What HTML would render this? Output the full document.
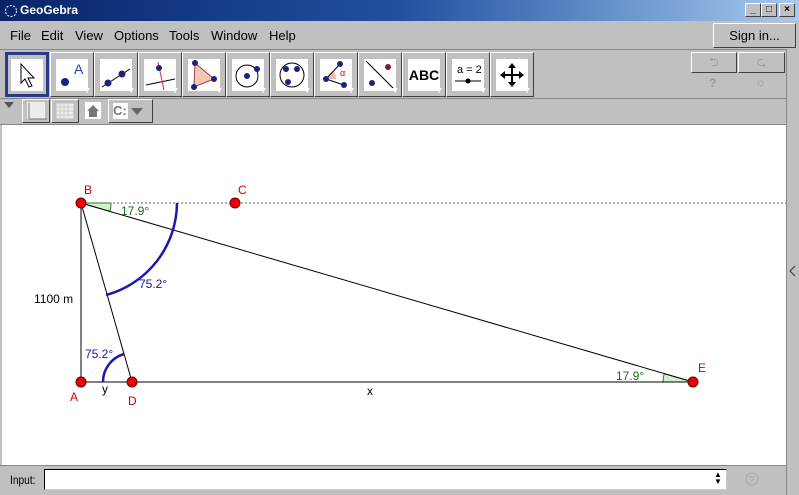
<!DOCTYPE html>
<html><head><meta charset="utf-8"><style>
*{margin:0;padding:0;box-sizing:border-box}
body{width:799px;height:495px;overflow:hidden;background:#c0c0c0;font-family:"Liberation Sans",sans-serif;position:relative}
.abs{position:absolute}
#title{left:0;top:0;width:799px;height:21px;background:linear-gradient(90deg,#0a246a,#2050a0 50%,#a6caf0);color:#fff;font-weight:bold;font-size:12px;line-height:21px;padding-left:20px}
.wb{top:3px;width:16px;height:14px;background:#c0c0c0;border:1px solid;border-color:#fff #404040 #404040 #fff;font-size:10px;line-height:12px;text-align:center;color:#000;font-weight:bold}
.m{top:28px;font-size:13px}
.btn{top:52px;width:44px;height:45px;background:#c0c0c0;border:1px solid;border-color:#fff #404040 #404040 #fff}
.btn .ic{position:absolute;left:5px;top:6px;width:32px;height:32px;background:#fff}
.btn .tri2{position:absolute;right:3px;bottom:3px;width:0;height:0;border-left:3px solid transparent;border-right:3px solid transparent;border-top:5px solid #fff}
.sb{top:99px;height:24px;border:1px solid;border-color:#fff #404040 #404040 #fff;background:#c0c0c0}
</style></head><body>
<div id="title" class="abs">GeoGebra</div>
<svg class="abs" style="left:4px;top:4px" width="14" height="14"><circle cx="7" cy="7" r="5.5" fill="none" stroke="#fff" stroke-dasharray="2,1.5"/></svg>
<div class="abs wb" style="left:745px">_</div>
<div class="abs wb" style="left:761px">□</div>
<div class="abs wb" style="left:779px">×</div>
<div class="abs m" style="left:10px">File</div>
<div class="abs m" style="left:41px">Edit</div>
<div class="abs m" style="left:75px">View</div>
<div class="abs m" style="left:114px">Options</div>
<div class="abs m" style="left:169px">Tools</div>
<div class="abs m" style="left:211px">Window</div>
<div class="abs m" style="left:269px">Help</div>
<div class="abs" style="left:713px;top:23px;width:83px;height:25px;border:1px solid;border-color:#fff #404040 #404040 #fff;font-size:13px;text-align:center;line-height:23px">Sign in...</div>
<div class="abs" style="left:0;top:49px;width:786px;height:1px;background:#888"></div>

<div class="abs btn" style="left:5px;border:3px solid #2a3a8a;background:#c0c0c0"><div class="ic" style="left:3px;top:4px"><svg width="32" height="32"><path d="M10 5 L10 24 L14 20 L18 28 L21 27 L17 19 L23 19 Z" fill="#fff" stroke="#000"/></svg></div></div>
<div class="abs btn" style="left:50px"><div class="ic"><svg width="32" height="32"><circle cx="9" cy="23" r="4" fill="#1a237e"/><text x="18" y="15" font-size="14" fill="#1a3fcc" font-family="Liberation Sans">A</text></svg></div><div class="tri2"></div></div>
<div class="abs btn" style="left:94px"><div class="ic"><svg width="32" height="32"><line x1="2" y1="28" x2="30" y2="10" stroke="#000"/><circle cx="8" cy="24" r="3.5" fill="#1a237e"/><circle cx="22" cy="15" r="3.5" fill="#1a237e"/></svg></div><div class="tri2"></div></div>
<div class="abs btn" style="left:138px"><div class="ic"><svg width="32" height="32"><line x1="2" y1="26" x2="31" y2="20" stroke="#000"/><line x1="14" y1="3" x2="20" y2="31" stroke="#e03030"/><circle cx="15" cy="9" r="3" fill="#1a237e"/></svg></div><div class="tri2"></div></div>
<div class="abs btn" style="left:182px"><div class="ic"><svg width="32" height="32"><path d="M7 4 L26 20 L6 28 Z" fill="#f0c8b8" stroke="#a04040"/><circle cx="7" cy="4" r="3" fill="#1a237e"/><circle cx="26" cy="20" r="3" fill="#1a237e"/><circle cx="6" cy="28" r="3" fill="#1a237e"/></svg></div><div class="tri2"></div></div>
<div class="abs btn" style="left:226px"><div class="ic"><svg width="32" height="32"><circle cx="15" cy="17" r="11" fill="none" stroke="#000"/><circle cx="15" cy="17" r="3" fill="#1a237e"/><circle cx="25" cy="10" r="3" fill="#1a237e"/></svg></div><div class="tri2"></div></div>
<div class="abs btn" style="left:270px"><div class="ic"><svg width="32" height="32"><circle cx="16" cy="16" r="12" fill="none" stroke="#000"/><circle cx="10" cy="10" r="3" fill="#1a237e"/><circle cx="21" cy="10" r="3" fill="#1a237e"/><circle cx="12" cy="23" r="3" fill="#1a237e"/></svg></div><div class="tri2"></div></div>
<div class="abs btn" style="left:314px"><div class="ic"><svg width="32" height="32"><path d="M6 20 L16 20 A10 10 0 0 0 13 12 Z" fill="#f0b8b8"/><line x1="6" y1="20" x2="20" y2="5" stroke="#000"/><line x1="6" y1="20" x2="24" y2="26" stroke="#000"/><circle cx="6" cy="20" r="3" fill="#1a237e"/><circle cx="20" cy="5" r="3" fill="#1a237e"/><circle cx="24" cy="26" r="3" fill="#1a237e"/><text x="20" y="17" font-size="9" fill="#d00">α</text></svg></div><div class="tri2"></div></div>
<div class="abs btn" style="left:358px"><div class="ic"><svg width="32" height="32"><line x1="2" y1="2" x2="30" y2="30" stroke="#000"/><circle cx="24" cy="8" r="3" fill="#8b1a1a"/><circle cx="8" cy="24" r="3" fill="#1a237e"/></svg></div><div class="tri2"></div></div>
<div class="abs btn" style="left:402px"><div class="ic" style="font-size:14px;line-height:32px;text-align:center;font-weight:bold">ABC</div><div class="tri2"></div></div>
<div class="abs btn" style="left:446px"><div class="ic"><svg width="32" height="32"><text x="5" y="14" font-size="11" font-family="Liberation Sans">a = 2</text><line x1="3" y1="22" x2="29" y2="22" stroke="#000"/><circle cx="16" cy="22" r="2.5" fill="#000"/></svg></div><div class="tri2"></div></div>
<div class="abs btn" style="left:490px"><div class="ic"><svg width="32" height="32"><path d="M16 4 L20 9 L17 9 L17 15 L23 15 L23 12 L28 16 L23 20 L23 17 L17 17 L17 23 L20 23 L16 28 L12 23 L15 23 L15 17 L9 17 L9 20 L4 16 L9 12 L9 15 L15 15 L15 9 L12 9 Z" fill="#000"/></svg></div><div class="tri2"></div></div>

<div class="abs" style="left:691px;top:52px;width:46px;height:21px;border:1px solid;border-color:#fff #404040 #404040 #fff;color:#999;text-align:center;font-size:12px;line-height:19px">⮌</div>
<div class="abs" style="left:738px;top:52px;width:47px;height:21px;border:1px solid;border-color:#fff #404040 #404040 #fff;color:#999;text-align:center;font-size:12px;line-height:19px">⮎</div>
<div class="abs" style="left:709px;top:76px;color:#999;font-size:12px;font-weight:bold">?</div>
<div class="abs" style="left:755px;top:75px;color:#999;font-size:12px">☼</div>
<div class="abs" style="left:786px;top:49px;width:1px;height:446px;background:#888"></div>

<div class="abs" style="left:0;top:98px;width:786px;height:1px;background:#888"></div>
<svg class="abs" style="left:4px;top:102px" width="10" height="6"><path d="M0 0 L10 0 L5 6Z" fill="#555"/></svg>
<div class="abs sb" style="left:22px;width:28px"><svg width="26" height="22"><rect x="4" y="2" width="18" height="17" fill="#fff" opacity=".7"/><path d="M6 3 V19 H24" fill="none" stroke="#777"/></svg></div>
<div class="abs sb" style="left:51px;width:28px"><svg width="26" height="22"><rect x="4" y="3" width="18" height="16" fill="#eee" stroke="#bbb"/><path d="M4 7H22M4 11H22M4 15H22M8 3V19M12 3V19M16 3V19" stroke="#ccc"/></svg></div>
<div class="abs" style="left:85px;top:102px;width:16px;height:17px;background:#fff"><svg width="16" height="17"><path d="M8 3 L14 9 L12 9 L12 15 L4 15 L4 9 L2 9Z" fill="#777"/></svg></div>
<div class="abs sb" style="left:108px;width:45px"><div style="position:absolute;left:4px;top:3px;width:15px;height:16px;background:#fff;color:#777;font-weight:bold;font-size:13px;line-height:16px">C:</div><svg class="abs" style="left:22px;top:8px" width="12" height="7"><path d="M0 0H12L6 7Z" fill="#666"/></svg></div>
<div class="abs" style="left:0;top:124px;width:786px;height:1px;background:#888"></div>

<svg class="abs" style="left:0;top:125px" width="786" height="340">
<rect x="2" y="0" width="784" height="340" fill="#fff"/>
<g transform="translate(0,-125)">
<line x1="81" y1="203" x2="786" y2="203" stroke="#666" stroke-dasharray="2,2"/>
<path d="M81 203 L111 203 A30 30 0 0 1 110 211.4 Z" fill="#d8ecd8" stroke="#2a7a2a"/>
<path d="M693 382 L663 382 A30 30 0 0 1 664.2 373.6 Z" fill="#d8ecd8" stroke="#2a7a2a"/>
<line x1="81" y1="203" x2="81" y2="382" stroke="#000"/>
<line x1="81" y1="382" x2="693" y2="382" stroke="#000"/>
<line x1="81" y1="203" x2="132" y2="382" stroke="#000"/>
<line x1="81" y1="203" x2="693" y2="382" stroke="#000"/>
<path d="M177 203 A96 96 0 0 1 106 295" fill="none" stroke="#1a1ab0" stroke-width="2.5"/>
<path d="M103 382 A29 29 0 0 1 124 354" fill="none" stroke="#1a1ab0" stroke-width="2.5"/>
<g fill="#e00" stroke="#600" stroke-width="1">
<circle cx="81" cy="203" r="5"/><circle cx="235" cy="203" r="5"/><circle cx="81" cy="382" r="5"/><circle cx="132" cy="382" r="5"/><circle cx="693" cy="382" r="5"/>
</g>
<g font-family="Liberation Sans" font-size="12">
<text x="84" y="194" fill="#c00">B</text><text x="238" y="194" fill="#c00">C</text><text x="70" y="401" fill="#c00">A</text><text x="128" y="405" fill="#c00">D</text><text x="698" y="372" fill="#c00">E</text>
<text x="121" y="215" fill="#1a6a1a">17.9°</text><text x="616" y="380" fill="#1a6a1a">17.9°</text>
<text x="139" y="288" fill="#1a1a9a">75.2°</text><text x="85" y="358" fill="#1a1a9a">75.2°</text>
<text x="34" y="303" fill="#000">1100 m</text><text x="102" y="393" fill="#000">y</text><text x="367" y="395" fill="#000">x</text>
</g></g></svg>
<svg class="abs" style="left:789px;top:265px" width="8" height="12"><path d="M6 1 L1 6 L6 11" fill="none" stroke="#333"/></svg>
<div class="abs" style="left:0;top:465px;width:786px;height:1px;background:#888"></div>
<div class="abs" style="left:10px;top:473px;font-size:12px;transform:scaleX(.85);transform-origin:left">Input:</div>
<div class="abs" style="left:44px;top:469px;width:683px;height:21px;background:#fff;border:1px solid;border-color:#000 #ccc #ccc #000"></div>
<div class="abs" style="left:714px;top:471px;font-size:8px;line-height:7px">▲<br>▼</div>
<svg class="abs" style="left:745px;top:472px" width="14" height="14"><circle cx="7" cy="7" r="6" fill="none" stroke="#aaa"/><text x="4" y="11" font-size="10" fill="#aaa">?</text></svg>
</body></html>
